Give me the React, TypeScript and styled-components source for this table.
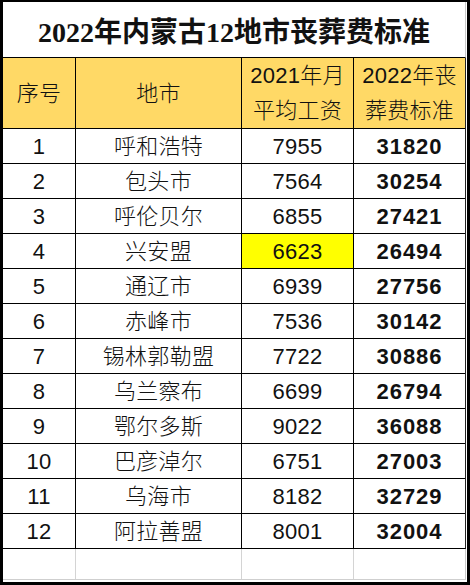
import React, { FC } from 'react';
import styled, { createGlobalStyle } from 'styled-components';

const GlobalStyle = createGlobalStyle`
  html, body {
    margin: 0;
    padding: 0;
    background: #fff;
  }
`;

const Frame = styled.div`
  width: 470px;
  height: 585px;
  box-sizing: border-box;
  border-style: solid;
  border-color: #000;
  border-width: 2px 3px 3px 3px;
  background: #fff;
  display: flex;
  flex-direction: column;
`;

const Sheet = styled.div`
  width: 463px;
  display: flex;
  flex-direction: column;
`;

const Title = styled.div`
  height: 55px;
  box-sizing: content-box;
  border-bottom: 1px solid #000;
  border-right: 1px solid #c8c8c8;
  display: flex;
  align-items: center;
  justify-content: center;
  font-family: 'Liberation Serif', 'Noto Sans CJK SC', serif;
  font-weight: 700;
  font-size: 28px;
  color: #111;
  line-height: 1;
  & > span {
    transform: translateY(3px);
  }
`;

const Grid = styled.div<{ $muted?: boolean }>`
  display: grid;
  grid-template-columns: 72px 165px 111px 111px;
  gap: 1px;
  background: ${(p) => (p.$muted ? '#d4d4d4' : '#000')};
  border-bottom: 1px solid ${(p) => (p.$muted ? '#cfcfcf' : '#000')};
  border-right: 1px solid ${(p) => (p.$muted ? '#c8c8c8' : '#222')};
`;

const Cell = styled.div<{ $bg?: string; $bold?: boolean; $height: number }>`
  height: ${(p) => p.$height}px;
  background: ${(p) => p.$bg || '#fff'};
  display: flex;
  flex-direction: column;
  align-items: center;
  justify-content: center;
  font-family: 'Liberation Sans', 'Noto Sans CJK SC', sans-serif;
  font-size: 22px;
  font-weight: ${(p) => (p.$bold ? 700 : 300)};
  letter-spacing: ${(p) => (p.$bold ? '1px' : '0.3px')};
  color: #111;
  line-height: 35px;
  white-space: nowrap;
`;

type Row = {
  id: number;
  city: string;
  wage: number;
  fee: number;
  highlight?: boolean;
};

const rows: Row[] = [
  { id: 1, city: '呼和浩特', wage: 7955, fee: 31820 },
  { id: 2, city: '包头市', wage: 7564, fee: 30254 },
  { id: 3, city: '呼伦贝尔', wage: 6855, fee: 27421 },
  { id: 4, city: '兴安盟', wage: 6623, fee: 26494, highlight: true },
  { id: 5, city: '通辽市', wage: 6939, fee: 27756 },
  { id: 6, city: '赤峰市', wage: 7536, fee: 30142 },
  { id: 7, city: '锡林郭勒盟', wage: 7722, fee: 30886 },
  { id: 8, city: '乌兰察布', wage: 6699, fee: 26794 },
  { id: 9, city: '鄂尔多斯', wage: 9022, fee: 36088 },
  { id: 10, city: '巴彦淖尔', wage: 6751, fee: 27003 },
  { id: 11, city: '乌海市', wage: 8182, fee: 32729 },
  { id: 12, city: '阿拉善盟', wage: 8001, fee: 32004 },
];

const HEAD = '#ffd966';

const App: FC = () => (
  <>
    <GlobalStyle />
    <Frame>
      <Sheet>
        <Title>
          <span>2022年内蒙古12地市丧葬费标准</span>
        </Title>
        <Grid>
          <Cell $bg={HEAD} $height={70}>序号</Cell>
          <Cell $bg={HEAD} $height={70}>地市</Cell>
          <Cell $bg={HEAD} $height={70}>
            <span>2021年月</span>
            <span>平均工资</span>
          </Cell>
          <Cell $bg={HEAD} $height={70}>
            <span>2022年丧</span>
            <span>葬费标准</span>
          </Cell>
          {rows.map((r) => (
            <React.Fragment key={r.id}>
              <Cell $height={34}>{r.id}</Cell>
              <Cell $height={34}>{r.city}</Cell>
              <Cell $height={34} $bg={r.highlight ? '#ffff00' : undefined}>
                {r.wage}
              </Cell>
              <Cell $height={34} $bold>
                {r.fee}
              </Cell>
            </React.Fragment>
          ))}
        </Grid>
        <Grid $muted>
          <Cell $height={30} />
          <Cell $height={30} />
          <Cell $height={30} />
          <Cell $height={30} />
        </Grid>
      </Sheet>
    </Frame>
  </>
);

export default App;
